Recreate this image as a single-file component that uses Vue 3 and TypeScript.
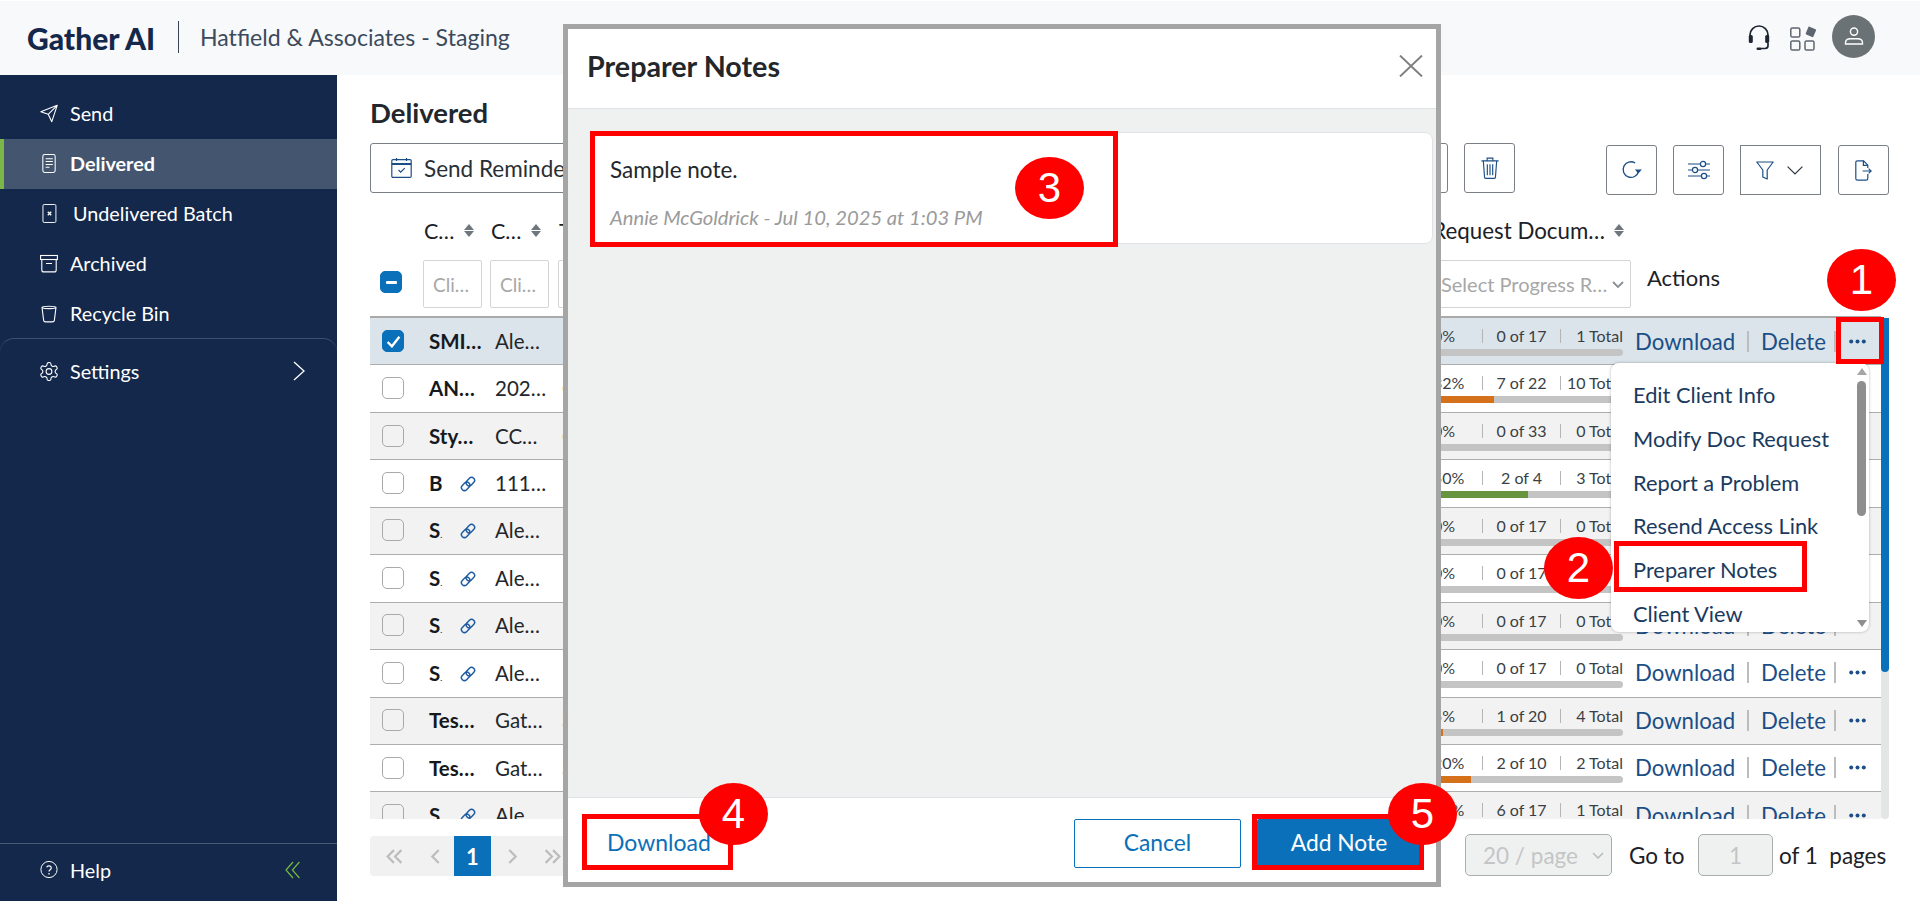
<script setup lang="ts">
interface Row {
  name: string
  linked: boolean
  client: string
  third: string
  pct: string
  count: string
  total: string
  fill: number
  tone: string
}

const mk = (name: string, linked: boolean, client: string, third: string, pct: string, count: string, total: string, fill: number, tone = ''): Row =>
  ({ name, linked, client, third, pct, count, total, fill, tone })

const rows: Row[] = [
  mk('SMI…', false, 'Ale…', '', '0%', '0 of 17', '1 Total', 0),
  mk('AN…', false, '202…', 'C', '32%', '7 of 22', '10 Total', 32, 'orange'),
  mk('Sty…', false, 'CC…', 'C', '0%', '0 of 33', '0 Total', 0),
  mk('B', true, '111…', '', '50%', '2 of 4', '3 Total', 50, 'green'),
  mk('S', true, 'Ale…', '', '0%', '0 of 17', '0 Total', 0),
  mk('S', true, 'Ale…', '', '0%', '0 of 17', '0 Total', 0),
  mk('S', true, 'Ale…', '', '0%', '0 of 17', '0 Total', 0),
  mk('S', true, 'Ale…', '', '0%', '0 of 17', '0 Total', 0),
  mk('Tes…', false, 'Gat…', 'S', '5%', '1 of 20', '4 Total', 5, 'orange'),
  mk('Tes…', false, 'Gat…', 'S', '20%', '2 of 10', '2 Total', 20, 'orange'),
  mk('S', true, 'Ale…', '', '35%', '6 of 17', '1 Total', 35, 'orange'),
]

const menu = ['Edit Client Info', 'Modify Doc Request', 'Report a Problem', 'Resend Access Link', 'Preparer Notes', 'Client View']
</script>

<template>
  <div class="app">
    <header class="topbar">
      <span class="logo">Gather AI</span>
      <span class="firm">Hatfield &amp; Associates - Staging</span>
      <div class="top-icons">
        <svg class="ic-headset" viewBox="0 0 22 26" fill="none" stroke="#1c2530" stroke-width="1.7">
          <path d="M2 14V10a9 9 0 0 1 18 0v4" />
          <rect x="0.8" y="10" width="4" height="8" rx="1.6" fill="#1c2530" stroke="none" />
          <rect x="17.2" y="10" width="4" height="8" rx="1.6" fill="#1c2530" stroke="none" />
          <path d="M20 18v2.5a3 3 0 0 1-3 3h-4" />
          <rect x="8.5" y="22.4" width="5" height="2.6" rx="1.3" fill="#1c2530" stroke="none" />
        </svg>
        <svg class="ic-apps" viewBox="0 0 27 25" fill="none" stroke="#5d6670" stroke-width="1.5">
          <rect x="0.8" y="2" width="9" height="9" rx="1.6" />
          <rect x="0.8" y="15" width="9" height="9" rx="1.6" />
          <rect x="15" y="15" width="9" height="9" rx="1.6" />
          <path d="M19 0.5l6.5 2.8a1 1 0 0 1 .5 1.3l-2.6 6a1 1 0 0 1-1.3.5l-5.8-2.6a1 1 0 0 1-.5-1.3l2.6-6.2a1 1 0 0 1 .6-.5z" fill="#5d6670" stroke="none" />
        </svg>
        <span class="avatar">
          <svg viewBox="0 0 20 20" fill="none" stroke="#fff" stroke-width="1.4">
            <circle cx="10" cy="5.6" r="3.6" />
            <path d="M1.5 18v-1.2c0-2.6 2.4-4 5-4h7c2.6 0 5 1.4 5 4V18z" />
          </svg>
        </span>
      </div>
    </header>

    <div class="shell">
      <aside class="sidebar">
        <nav class="nav">
          <a class="nav-item">
            <svg class="nav-ic" viewBox="0 0 18 18" fill="none" stroke="#fff" stroke-width="1.1" stroke-linejoin="round"><path d="M0.8 7.2 17.2 0.8 11.8 17.2 8.2 9.8zM8.2 9.8 17.2 0.8" /></svg>
            <span>Send</span>
          </a>
          <a class="nav-item active">
            <svg class="nav-ic" viewBox="0 0 18 20" fill="none" stroke="#fff" stroke-width="1.1"><rect x="2.5" y="0.6" width="13" height="18.8" rx="2" /><path d="M5.5 5h7.5M5.5 8h7.5M5.5 11h7.5M5.5 14h4" /></svg>
            <span>Delivered</span>
          </a>
          <a class="nav-item undel">
            <svg class="nav-ic" viewBox="0 0 18 22" fill="none" stroke="#fff" stroke-width="1.1"><rect x="2" y="0.6" width="15" height="20.8" rx="1.4" /><path d="M7.6 9l4 4M11.6 9l-4 4" stroke-width="1.5" /></svg>
            <span>Undelivered Batch</span>
          </a>
          <a class="nav-item">
            <svg class="nav-ic" viewBox="0 0 18 18" fill="none" stroke="#fff" stroke-width="1.1"><rect x="0.6" y="1" width="16.8" height="4" /><path d="M1.8 5v10.4a2 2 0 0 0 2 2h10.4a2 2 0 0 0 2-2V5M6 9h6" /></svg>
            <span>Archived</span>
          </a>
          <a class="nav-item">
            <svg class="nav-ic" viewBox="0 0 18 18" fill="none" stroke="#fff" stroke-width="1.1"><path d="M2 2.8C2 1.4 16 1.4 16 2.8L14.4 15.6a2 2 0 0 1-2 1.8H5.6a2 2 0 0 1-2-1.8zM2 3.2C5 4.4 13 4.4 16 3.2" /></svg>
            <span>Recycle Bin</span>
          </a>
          <a class="nav-item settings">
            <svg class="nav-ic" viewBox="2 2 20 20" fill="none" stroke="#fff" stroke-width="1.2"><path d="M12.22 2h-.44a2 2 0 0 0-2 2v.18a2 2 0 0 1-1 1.73l-.43.25a2 2 0 0 1-2 0l-.15-.08a2 2 0 0 0-2.73.73l-.22.38a2 2 0 0 0 .73 2.73l.15.1a2 2 0 0 1 1 1.72v.51a2 2 0 0 1-1 1.74l-.15.09a2 2 0 0 0-.73 2.73l.22.38a2 2 0 0 0 2.73.73l.15-.08a2 2 0 0 1 2 0l.43.25a2 2 0 0 1 1 1.73V20a2 2 0 0 0 2 2h.44a2 2 0 0 0 2-2v-.18a2 2 0 0 1 1-1.73l.43-.25a2 2 0 0 1 2 0l.15.08a2 2 0 0 0 2.73-.73l.22-.39a2 2 0 0 0-.73-2.73l-.15-.08a2 2 0 0 1-1-1.74v-.5a2 2 0 0 1 1-1.74l.15-.09a2 2 0 0 0 .73-2.73l-.22-.38a2 2 0 0 0-2.73-.73l-.15.08a2 2 0 0 1-2 0l-.43-.25a2 2 0 0 1-1-1.73V4a2 2 0 0 0-2-2z" /><circle cx="12" cy="12" r="3.2" /></svg>
            <span>Settings</span>
            <svg class="nav-chev" viewBox="0 0 12 20" fill="none" stroke="#fff" stroke-width="1.3"><path d="M1 1l10 9-10 9" /></svg>
          </a>
        </nav>
        <div class="help">
          <svg class="nav-ic" viewBox="0 0 20 20" fill="none" stroke="#fff" stroke-width="1.1"><circle cx="10" cy="10" r="9" /><path d="M7.4 7.6a2.7 2.7 0 0 1 5.2.8c0 1.7-2.6 2.1-2.6 3.8" stroke-width="1.3" /><circle cx="10" cy="14.8" r="0.9" fill="#fff" stroke="none" /></svg>
          <span>Help</span>
          <svg class="collapse" viewBox="0 0 15 18" fill="none" stroke="#74b843" stroke-width="1.2"><path d="M8 1 1 9l7 8M14.4 1 7.4 9l7 8" /></svg>
        </div>
      </aside>

      <main class="main">
        <h1 class="page-title">Delivered</h1>

        <div class="toolbar">
          <div class="tool-left">
            <button class="btn reminder">
              <svg class="ic20" viewBox="0 0 21 20" fill="none" stroke="#1b4e86" stroke-width="1.2"><rect x="0.8" y="1.6" width="19.4" height="17.8" rx="1.2" /><path d="M0.8 6h19.4" stroke-width="2" /><path d="M5.5 0v3M15.5 0v3M7.5 12l2.2 2.2 4-4" /></svg>
              <span>Send Reminders</span>
            </button>
            <button class="btn hidden-btn"></button>
            <button class="btn square">
              <svg class="ic22" viewBox="0 0 20 23" fill="none" stroke="#1b4e86" stroke-width="1.2"><path d="M1 4h18M7 4V1.2h6V4M3 4l1.3 17a1.6 1.6 0 0 0 1.6 1.4h8.2a1.6 1.6 0 0 0 1.6-1.4L17 4M7.2 7.5v11.5M10 7.5v11.5M12.8 7.5v11.5" /></svg>
            </button>
          </div>
          <div class="tool-right">
            <button class="btn square">
              <svg class="ic20" viewBox="0 0 20 20" fill="none" stroke="#1b4e86" stroke-width="1.3"><path d="M17 11.5A7.8 7.8 0 1 1 13.6 3" /><path d="M13.4 9.6h7l-3.5 3.9z" fill="#1b4e86" stroke="none" /></svg>
            </button>
            <button class="btn square">
              <svg class="ic22" viewBox="0 0 22 20" fill="none" stroke="#1b4e86" stroke-width="1.2"><path d="M0 4h12M18 4h4M0 10h4M10 10h12M0 16h13M19 16h3" /><circle cx="15" cy="4" r="2.6" /><circle cx="7" cy="10" r="2.6" /><circle cx="16" cy="16" r="2.6" /></svg>
            </button>
            <button class="btn filter">
              <svg class="ic-filter" viewBox="0 0 18 19" fill="none" stroke="#1b4e86" stroke-width="1.2" stroke-linejoin="round"><path d="M0.8 1h16.4l-6 8v9l-4.4-2V9z" /></svg>
              <svg class="ic-down" viewBox="0 0 16 9" fill="none" stroke="#2a3340" stroke-width="1.2"><path d="M0.6 0.6 8 8l7.4-7.4" /></svg>
            </button>
            <button class="btn square">
              <svg class="ic-export" viewBox="0 0 17 21" fill="none" stroke="#1b4e86" stroke-width="1.2"><path d="M12.8 14v4.6a1.6 1.6 0 0 1-1.6 1.6H2.4a1.6 1.6 0 0 1-1.6-1.6V2.4A1.6 1.6 0 0 1 2.4.8h6.2l4.2 4.4V8" /><path d="M8.4.8v4.6h4.4" /><path d="M7.6 11h8.6M13.6 8.6l2.6 2.4-2.6 2.4" /></svg>
            </button>
          </div>
        </div>

        <div class="table-wrap">
          <div class="thead">
            <div class="tr head-row">
              <span></span>
              <span class="th">C… <i class="sort"></i></span>
              <span class="th">C… <i class="sort"></i></span>
              <span class="th">T…</span>
              <span class="th doc">Request Docum… <i class="sort"></i></span>
              <span></span>
            </div>
            <div class="tr filter-row">
              <span class="check-cell head-check"><span class="check minus"></span></span>
              <span class="fbox"><span>Cli…</span></span>
              <span class="fbox"><span>Cli…</span></span>
              <span class="fbox wide"></span>
              <span class="fbox select">
                <span>Select Progress R…</span>
                <svg viewBox="0 0 12 7" fill="none" stroke="#8a8f94" stroke-width="1.8"><path d="M1 1l5 5 5-5" /></svg>
              </span>
              <span class="actions-title">Actions</span>
            </div>
          </div>

          <div class="tbody">
            <div class="rows">
              <div v-for="(r, i) in rows" :key="i" class="tr row" :class="{ selected: i === 0, odd: i > 0 && i % 2 === 0 }">
                <span class="check-cell row-check"><span class="check" :class="{ on: i === 0 }">
                  <svg v-if="i === 0" viewBox="0 0 14 12" fill="none" stroke="#fff" stroke-width="2.2"><path d="M1.5 6.5 5.5 10.5 12.5 1.5" /></svg>
                </span></span>
                <span class="name">
                  <b>{{ r.name }}<small v-if="r.name === 'S'">.</small></b>
                  <svg v-if="r.linked" class="link" viewBox="0 0 24 24" fill="none" stroke="#1d5aa0" stroke-width="2.2"><g transform="rotate(-45 12 12)"><rect x="0" y="7.5" width="14" height="9" rx="4.5" /><rect x="10" y="7.5" width="14" height="9" rx="4.5" /></g></svg>
                </span>
                <span class="client">{{ r.client }}</span>
                <span class="third">{{ r.third }}</span>
                <span class="progress">
                  <span class="stats">
                    <span class="pct">{{ r.pct }}</span>
                    <span class="count">{{ r.count }}</span>
                    <span class="total">{{ r.total }}</span>
                  </span>
                  <span class="bar"><span class="fill" :class="r.tone" :style="{ width: r.fill + '%' }"></span></span>
                </span>
                <span class="actions">
                  <a class="dl">Download</a>
                  <a class="del">Delete</a>
                  <svg class="dots" viewBox="0 0 17 5" fill="#1b4e86"><circle cx="2.2" cy="2.5" r="2" /><circle cx="8.5" cy="2.5" r="2" /><circle cx="14.8" cy="2.5" r="2" /></svg>
                </span>
              </div>
            </div>
            <div class="vscroll"><span class="vthumb"></span></div>
          </div>
        </div>

        <div class="pager-bar">
          <div class="pager">
            <span class="pg"><svg viewBox="0 0 16 14" fill="none" stroke="#bcbcbc" stroke-width="2"><path d="M7.5 1 1.5 7l6 6M14.5 1l-6 6 6 6" /></svg></span>
            <span class="pg"><svg class="one" viewBox="0 0 9 14" fill="none" stroke="#bcbcbc" stroke-width="2"><path d="M8 1 2 7l6 6" /></svg></span>
            <span class="pg current">1</span>
            <span class="pg"><svg class="one" viewBox="0 0 9 14" fill="none" stroke="#bcbcbc" stroke-width="2"><path d="M1 1l6 6-6 6" /></svg></span>
            <span class="pg"><svg viewBox="0 0 16 14" fill="none" stroke="#bcbcbc" stroke-width="2"><path d="M1.5 1l6 6-6 6M8.5 1l6 6-6 6" /></svg></span>
          </div>
          <div class="pager-right">
            <span class="per-page">
              <span>20 / page</span>
              <svg viewBox="0 0 12 7" fill="none" stroke="#b9bcbf" stroke-width="1.6"><path d="M1 1l5 5 5-5" /></svg>
            </span>
            <span class="goto">Go to</span>
            <span class="page-input">1</span>
            <span class="of">of 1&nbsp; pages</span>
          </div>
        </div>
      </main>
    </div>

    <div class="dropdown">
      <ul>
        <li v-for="m in menu" :key="m">{{ m }}</li>
      </ul>
      <i class="dd-up"></i>
      <i class="dd-thumb"></i>
      <i class="dd-down"></i>
    </div>

    <section class="modal">
      <div class="modal-head">
        <h2>Preparer Notes</h2>
        <svg class="close" viewBox="0 0 24 22" fill="none" stroke="#7f7f7f" stroke-width="2"><path d="M1 0.6 23 21.4M23 0.6 1 21.4" /></svg>
      </div>
      <div class="modal-body">
        <article class="note">
          <p class="note-text">Sample note.</p>
          <p class="note-meta">Annie McGoldrick - Jul 10, 2025 at 1:03 PM</p>
        </article>
      </div>
      <div class="modal-foot">
        <a class="foot-dl">Download</a>
        <button class="foot-btn cancel">Cancel</button>
        <button class="foot-btn add">Add Note</button>
      </div>
    </section>

    <i class="mark b1"></i>
    <i class="mark b2"></i>
    <i class="mark b3"></i>
    <i class="mark b4"></i>
    <i class="mark b5"></i>
    <span class="num n1">1</span>
    <span class="num n2">2</span>
    <span class="num n3">3</span>
    <span class="num n4">4</span>
    <span class="num n5">5</span>
  </div>
</template>

<style>
html, body { margin: 0; padding: 0; background: #fff; }
</style>

<style scoped>
.app {
  position: relative;
  width: 1920px;
  height: 901px;
  overflow: hidden;
  font-family: "Lato", "Noto Sans", sans-serif;
  color: #1c2127;
  background: #fff;
}
.topbar {
  height: 74px;
  margin-top: 1px;
  background: #f8f9fb;
  display: flex;
  align-items: center;
  box-sizing: border-box;
  padding-left: 27px;
}
.logo {
  font-family: "Lato", sans-serif;
  font-weight: 900;
  font-size: 30px;
  color: #14284b;
  width: 151px;
  white-space: nowrap;
}
.firm {
  border-left: 1px solid #39465a;
  height: 32px;
  line-height: 32px;
  padding-left: 21px;
  font-size: 23.1px;
  color: #3b4a5c;
  margin-bottom: 2px;
  white-space: nowrap;
}
.top-icons {
  margin-left: auto;
  display: flex;
  align-items: center;
  padding-right: 45px;
}
.ic-headset { width: 22px; height: 26px; margin-right: 20px; }
.ic-apps { width: 27px; height: 25px; margin-right: 15px; }
.avatar {
  width: 43px;
  height: 43px;
  border-radius: 50%;
  background: #6b7275;
  display: flex;
  align-items: center;
  justify-content: center;
  margin-bottom: 4px;
}
.avatar svg { width: 20px; height: 20px; }

.shell { display: flex; height: 826px; }
.sidebar {
  width: 337px;
  flex: none;
  background: #14284b;
  color: #fff;
  display: flex;
  flex-direction: column;
  font-size: 19.8px;
}
.nav { flex: 1; padding-top: 14px; }
.nav-item {
  height: 50px;
  display: flex;
  align-items: center;
  padding-left: 40px;
  padding-bottom: 2px;
  box-sizing: border-box;
}
.nav-ic { width: 18px; height: 19px; margin-right: 12px; flex: none; }
.nav-item.active {
  background: #44556f;
  border-left: 4px solid #7ab648;
  padding-left: 36px;
  font-weight: 700;
}
.nav-item.undel span { margin-left: 3px; }
.nav-item.settings {
  margin-top: -1px;
  height: 67px;
  border-top: 1px solid #3e5070;
  border-radius: 14px 14px 0 0;
}
.nav-chev { width: 12px; height: 20px; margin-left: auto; margin-right: 32px; }
.help {
  height: 58px;
  border-top: 1px solid #4a5a75;
  display: flex;
  align-items: center;
  padding-left: 40px;
  padding-bottom: 6px;
  box-sizing: border-box;
}
.collapse { width: 15px; height: 18px; margin-left: auto; margin-right: 37px; }

.main {
  flex: 1;
  min-width: 0;
  box-sizing: border-box;
  padding: 0 31px 0 33px;
  display: flex;
  flex-direction: column;
}
.page-title {
  margin: 22px 0 0;
  height: 46px;
  line-height: 32px;
  font-size: 27.5px;
  font-weight: 700;
  color: #22272d;
}
.toolbar { display: flex; height: 52px; justify-content: space-between; }
.tool-left, .tool-right { display: flex; gap: 16px; }
.tool-left { align-items: flex-start; }
.tool-right { align-items: flex-end; }
.btn {
  height: 50px;
  border: 1px solid #7a7f85;
  border-radius: 3px;
  background: #fff;
  display: flex;
  align-items: center;
  justify-content: center;
  padding: 0;
  box-sizing: border-box;
  font: inherit;
  color: #2a2f35;
}
.reminder { width: 250px; justify-content: flex-start; padding-left: 20px; font-size: 22.5px; gap: 12px; white-space: nowrap; overflow: hidden; }
.hidden-btn { width: 812px; }
.square { width: 51px; }
.filter { width: 81px; border-radius: 0; gap: 13px; padding-right: 2px; margin-right: 1px; }
.ic20 { width: 21px; height: 20px; flex: none; }
.ic22 { width: 22px; height: 22px; }
.ic-filter { width: 18px; height: 19px; }
.ic-down { width: 16px; height: 9px; }
.ic-export { width: 17px; height: 21px; }

.table-wrap { flex: none; display: flex; flex-direction: column; }
.tr {
  display: grid;
  grid-template-columns: 53px 67px 68px 867px 206px 250px;
  align-items: center;
}
.thead { width: 1511px; border-bottom: 2px solid #a9a9a9; height: 123px; box-sizing: border-box; }
.head-row { height: 65px; padding-top: 6px; box-sizing: border-box; }
.th { display: flex; align-items: center; font-size: 21.5px; white-space: nowrap; padding-left: 1px; gap: 9px; }
.th.doc { justify-content: flex-end; padding-right: 7px; font-size: 22.3px; }
.sort {
  width: 10px;
  height: 13px;
  flex: none;
  position: relative;
}
.sort::before, .sort::after {
  content: "";
  position: absolute;
  left: 0;
  border-left: 5px solid transparent;
  border-right: 5px solid transparent;
}
.sort::before { top: 0; border-bottom: 6px solid #70767d; }
.sort::after { bottom: 0; border-top: 6px solid #70767d; }
.filter-row { height: 48px; }
.check-cell { display: flex; padding-left: 10px; }
.head-check { margin-top: -4px; }
.check {
  width: 22px;
  height: 22px;
  box-sizing: border-box;
  border: 1px solid #a9a9a9;
  border-radius: 5px;
  display: flex;
  align-items: center;
  justify-content: center;
  background: #fff;
}
.odd .check { background: transparent; }
.check.on { background: #0a70b9; border-color: #0a70b9; }
.check.on svg { width: 15px; height: 13px; }
.check.minus { background: #0a70b9; border-color: #0a70b9; }
.check.minus::after { content: ""; width: 11px; height: 3px; background: #fff; border-radius: 1px; }
.fbox {
  width: 59px;
  height: 48px;
  box-sizing: border-box;
  border: 1px solid #d5d5d5;
  border-radius: 2px;
  display: flex;
  align-items: center;
  padding-left: 9px;
  font-size: 19px;
  color: #a7a7a7;
  white-space: nowrap;
  overflow: hidden;
}
.fbox.wide { width: 100px; }
.fbox.select {
  width: 206px;
  padding-left: 15px;
  font-size: 20px;
  justify-content: space-between;
  padding-right: 6px;
}
.select svg { width: 12px; height: 7px; flex: none; }
.actions-title { font-size: 22px; padding-left: 16px; margin-top: -14px; }

.tbody { height: 501px; width: 1519px; overflow: hidden; display: flex; }
.rows { width: 1511px; }
.row {
  height: 47.44px;
  box-sizing: border-box;
  border-bottom: 1px solid #adadad;
  background: #fff;
  font-size: 20.5px;
  grid-template-rows: 100%;
}
.row > span { margin-bottom: 1px; }
.row.odd { background: #f2f2f2; }
.row.selected { background: #dae4ea; }
.row.selected > span { margin-bottom: 0; }
.row-check { padding-left: 12px; }
.name { display: flex; align-items: center; padding-left: 6px; }
.name b { color: #15191e; font-weight: 700; width: 31px; white-space: nowrap; }
.name small { font-size: 8px; }
.link { width: 16px; height: 16px; flex: none; margin-top: 2px; }
.client { padding-left: 5px; white-space: nowrap; color: #22272d; }
.third { color: #777; padding-left: 4px; font-size: 18px; }
.row > .progress {
  align-self: stretch;
  margin-bottom: 0;
  display: flex;
  flex-direction: column;
  padding: 11px 8px 0;
  box-sizing: border-box;
  font-size: 16px;
  color: #3a3f45;
}
.stats { display: grid; grid-template-columns: 49px 78px 63px; align-items: center; height: 14px; line-height: 14px; white-space: nowrap; }
.count { border-left: 1px solid #b5b5b5; text-align: center; }
.total { border-left: 1px solid #b5b5b5; text-align: right; }
.bar {
  margin-top: 6px;
  height: 7px;
  background: #c4c4c4;
  border-radius: 0 4px 4px 0;
  overflow: hidden;
  display: block;
}
.fill { display: block; height: 100%; }
.fill.orange { background: #d4711a; }
.fill.green { background: #66943f; }
.actions { display: flex; align-items: center; padding-left: 4px; color: #1b4e86; font-size: 22.2px; }
.dl { width: 114px; border-right: 2px solid #bdbdbd; height: 21px; line-height: 21px; box-sizing: border-box; }
.del { width: 87px; padding-left: 12px; border-right: 2px solid #bdbdbd; height: 21px; line-height: 21px; box-sizing: border-box; }
.dots { width: 17px; height: 5px; margin-left: 13px; }
.vscroll {
  width: 8px;
  background: #e4e6e6;
  border-radius: 0 0 4px 4px;
}
.vthumb {
  display: block;
  height: 354px;
  background: #0a70b9;
  border-radius: 0 0 4px 4px;
}

.pager-bar { display: flex; align-items: flex-start; justify-content: space-between; padding-top: 17px; }
.pager {
  display: flex;
  height: 40px;
  width: 200px;
  background: #f1f1f1;
  border-radius: 4px;
}
.pg { display: flex; align-items: center; justify-content: center; }
.pg:nth-child(1) { width: 46px; padding-left: 2px; box-sizing: border-box; }
.pg:nth-child(2) { width: 38px; }
.pg:nth-child(3) { width: 37px; background: #0a70b9; color: #fff; font-weight: 700; font-size: 22px; }
.pg:nth-child(4) { width: 43px; }
.pg:nth-child(5) { width: 36px; }
.pg svg { width: 17px; height: 15px; }
.pg svg.one { width: 10px; }
.pager-right { display: flex; align-items: center; height: 42px; font-size: 22.5px; margin-top: -2px; }
.per-page {
  width: 147px;
  height: 42px;
  box-sizing: border-box;
  background: #eff1f1;
  border: 1px solid #a9adb0;
  border-radius: 5px;
  color: #c3c5c6;
  display: flex;
  align-items: center;
  justify-content: space-between;
  padding: 0 7px 0 17px;
}
.per-page svg { width: 12px; height: 7px; }
.goto { margin-left: 17px; width: 69px; }
.page-input {
  width: 75px;
  height: 42px;
  box-sizing: border-box;
  background: #eff1f1;
  border: 1px solid #a9adb0;
  border-radius: 5px;
  color: #c3c5c6;
  display: flex;
  align-items: center;
  justify-content: center;
}
.of { margin-left: 6px; width: 110px; white-space: nowrap; }

.dropdown {
  position: absolute;
  left: 1611px;
  top: 363px;
  width: 258px;
  height: 269px;
  background: #fff;
  border-radius: 8px;
  box-shadow: 0 0 3px rgba(0, 0, 0, 0.3);
  overflow: hidden;
}
.dropdown ul { list-style: none; margin: 0; padding: 10px 0 0 22px; }
.dropdown li { height: 43.8px; line-height: 43.8px; font-size: 21.8px; color: #1a3a5e; white-space: nowrap; }
.dd-up, .dd-down {
  position: absolute;
  left: 246px;
  border-left: 5px solid transparent;
  border-right: 5px solid transparent;
}
.dd-up { top: 5px; border-bottom: 7px solid #a5a5a5; }
.dd-down { bottom: 5px; border-top: 7px solid #8e8e8e; }
.dd-thumb { position: absolute; left: 246px; top: 18px; width: 9px; height: 135px; background: #8e8e8e; border-radius: 5px; }

.modal {
  position: absolute;
  left: 563px;
  top: 24px;
  width: 878px;
  height: 863px;
  box-sizing: border-box;
  border: 5px solid #a5a5a5;
  background: #fff;
  display: flex;
  flex-direction: column;
}
.modal-head {
  height: 80px;
  flex: none;
  display: flex;
  align-items: center;
  justify-content: space-between;
  box-sizing: border-box;
  padding: 0 13px 5px 19px;
  border-bottom: 1px solid #dfe2e6;
}
.modal-head h2 { margin: 0; font-size: 28.7px; font-weight: 700; color: #23272c; }
.close { width: 24px; height: 22px; }
.modal-body { flex: 1; background: #eff1f1; padding: 23px 3px 0 25px; }
.note {
  height: 112px;
  box-sizing: border-box;
  background: #fff;
  border: 1px solid #e0e2e8;
  border-radius: 8px;
  padding-left: 16px;
}
.note-text { margin: 24px 0 0; font-size: 22.5px; line-height: 26px; color: #23272c; }
.note-meta { margin: 22px 0 0; font-size: 20.2px; line-height: 24px; font-style: italic; color: #9a9a9a; white-space: nowrap; }
.modal-foot {
  height: 85px;
  flex: none;
  border-top: 1px solid #dfe2e6;
  display: flex;
  align-items: flex-start;
  box-sizing: border-box;
  padding: 21px 15px 0 39px;
}
.foot-dl { font-size: 23px; color: #0a70b9; line-height: 46px; }
.foot-btn {
  height: 49px;
  box-sizing: border-box;
  border-radius: 2px;
  font: inherit;
  font-size: 22.8px;
  display: block;
  padding: 0 0 3px;
}
.cancel { margin-left: auto; width: 167px; border: 1px solid #0a70b9; background: #fff; color: #0a70b9; }
.add { margin-left: 16px; width: 164px; border: 0; background: #0a70b9; color: #fff; }

.mark { position: absolute; box-sizing: border-box; border: 5px solid #fe0000; }
.b1 { left: 1836px; top: 317px; width: 48px; height: 47px; }
.b2 { left: 1614px; top: 541px; width: 193px; height: 51px; }
.b3 { left: 590px; top: 131px; width: 528px; height: 116px; }
.b4 { left: 582px; top: 814px; width: 151px; height: 56px; }
.b5 { left: 1252px; top: 814px; width: 172px; height: 56px; }
.num {
  position: absolute;
  width: 69px;
  height: 62px;
  border-radius: 50%;
  background: #fe0000;
  color: #fff;
  font-family: "Liberation Sans", sans-serif;
  font-size: 42px;
  line-height: 62px;
  text-align: center;
}
.n1 { left: 1827px; top: 249px; }
.n2 { left: 1544px; top: 537px; }
.n3 { left: 1015px; top: 157px; }
.n4 { left: 699px; top: 783px; }
.n5 { left: 1388px; top: 783px; }
</style>
